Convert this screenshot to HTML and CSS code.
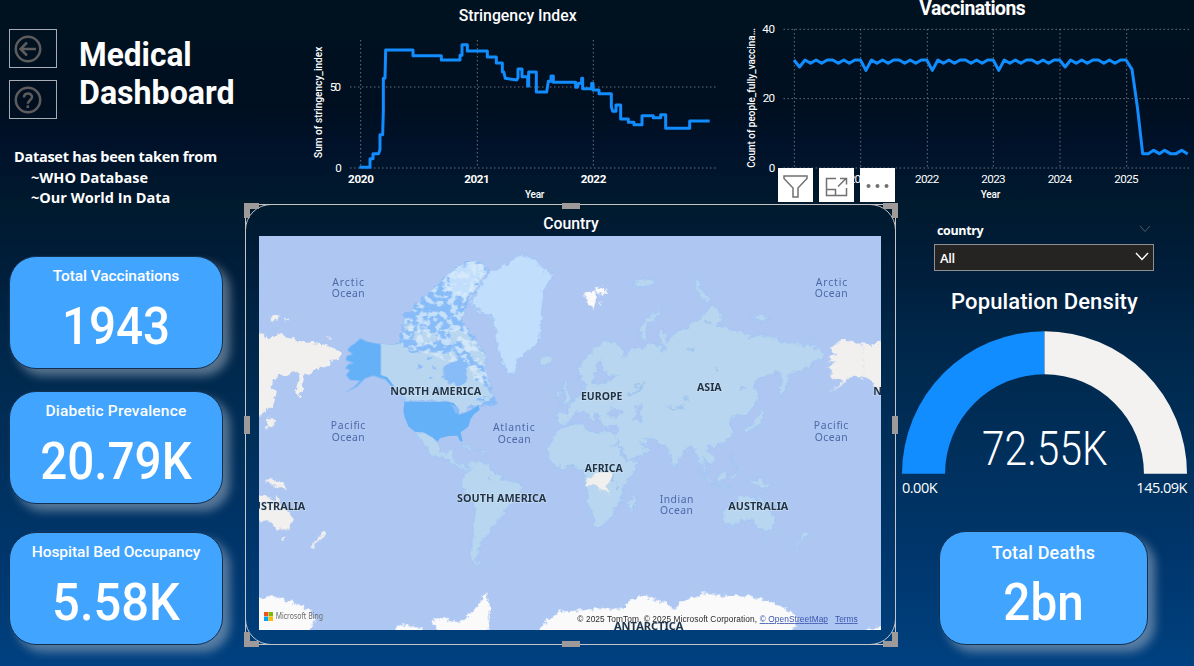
FILE: index.html
```html
<!DOCTYPE html>
<html lang="en">
<head>
<meta charset="utf-8">
<title>Medical Dashboard</title>
<link rel="stylesheet" href="styles.css">
</head>
<body>
<main class="dashboard">
  <aside class="sidebar">
    <header class="masthead">
      <nav class="nav-buttons">
        <button class="nav-button" aria-label="Back"><svg viewBox="0 0 28 28"><circle cx="14" cy="14" r="12.2"/><path d="M22 14H7M13 7.5 6.5 14l6.5 6.5"/></svg></button>
        <button class="nav-button" aria-label="Help"><svg viewBox="0 0 28 28"><circle cx="14" cy="14" r="12.2"/><path d="M10 11.5c0-5.2 8-5.2 8-.4 0 3-4.2 3.300-4.200 6.700M13.800 19.300v2.800"/></svg></button>
      </nav>
      <h1 class="title"><span class="t1">Medical</span><br><span class="t2">Dashboard</span></h1>
    </header>
    <div class="source">
      <p>Dataset has been taken from</p>
      <p class="indent">~WHO Database</p>
      <p class="indent">~Our World In Data</p>
    </div>
    <section class="cards">
      <article class="card"><h2 class="card-title vacc">Total Vaccinations</h2><p class="card-value v1">1943</p></article>
      <article class="card"><h2 class="card-title">Diabetic Prevalence</h2><p class="card-value v2">20.79K</p></article>
      <article class="card third"><h2 class="card-title beds">Hospital Bed Occupancy</h2><p class="card-value v3">5.58K</p></article>
    </section>
  </aside>

  <section class="charts">
    <svg class="chart stringency" viewBox="0 0 1290 612">
      <text class="chart-title" x="476" y="62" textLength="354" lengthAdjust="spacingAndGlyphs">Stringency Index</text>
      <g class="grid"><path d="M151 261H1246M151 504H1246M182 121V504M532 121V504M880 121V504"/></g>
      <text class="axis-name" transform="translate(66 474) rotate(-90)" textLength="334" lengthAdjust="spacingAndGlyphs">Sum of stringency_index</text>
      <text class="tick" x="89" y="272" textLength="34">50</text>
      <text class="tick" x="106" y="515">0</text>
      <text class="tick bold" x="144" y="549" textLength="78">2020</text>
      <text class="tick bold" x="493" y="549" textLength="76">2021</text>
      <text class="tick bold" x="842" y="549" textLength="77">2022</text>
      <text class="axis-name" x="675" y="594" textLength="58">Year</text>
      <path class="line" d="M178 502H210V476H219V461H236L240 448V404H248L250 330V235H255L257 150H339V167H424V180H480V166H486V134H502V153H562V171H589V189H607V215H611L616 235 650 240 654 233V207H666V230H683V258H686V216H709V276H740L745 244H753V228H760V247H827V262H832L836 250H845V235H848V266H875V250H879V270H897V281H934V320L938 334H948V315H962V357H985V367H1002V374H1026V347H1060V353H1082V344H1097V385H1169V363H1229"/>
    </svg>
    <svg class="chart vaccinations" viewBox="0 0 1392 612">
      <text class="chart-title bold" x="568" y="46" textLength="319">Vaccinations</text>
      <g class="grid"><path d="M161 88H1384M161 296H1384M161 504H1384M193 88V504M392 88V504M592 88V504M790 88V504M990 88V504M1190 88V504"/></g>
      <text class="axis-name" transform="translate(75 503) rotate(-90)" textLength="418" lengthAdjust="spacingAndGlyphs">Count of people_fully_vaccina…</text>
      <text class="tick" x="97" y="99" textLength="38">40</text>
      <text class="tick" x="98" y="306" textLength="37">20</text>
      <text class="tick" x="116" y="515">0</text>
      <text class="tick" x="356" y="549" textLength="73">2021</text>
      <text class="tick" x="555" y="549" textLength="73">2022</text>
      <text class="tick" x="754" y="549" textLength="73">2023</text>
      <text class="tick" x="953" y="549" textLength="73">2024</text>
      <text class="tick" x="1153" y="549" textLength="73">2025</text>
      <text class="axis-name" x="752" y="594" textLength="59">Year</text>
      <path class="line" d="M192 180l16.600 21 16.600-21 16.600 10 16.600-10 16.600 10 16.600-10h16.600l16.600 10 16.600-10 16.600 10 16.600-10h16.600l16.600 31 16.600-31 16.600 10 16.600-10 16.600 10 16.600-10h16.600l16.600 10 16.600-10 16.600 10 16.600-10h16.600l16.600 31 16.600-31 16.600 10 16.600-10 16.600 10 16.600-10h16.600l16.600 10 16.600-10 16.600 10 16.600-10h16.600l16.600 31 16.600-31 16.600 10 16.600-10 16.600 10 16.600-10h16.600l16.600 10 16.600-10 16.600 10 16.600-10h16.600l16.600 21 16.600-21 16.600 10 16.600-10 16.600 10 16.600-10h16.600l16.600 10 16.600-10 16.600 10 16.600-10h16.600L1206 208 1222 320 1238 461H1255L1271 451 1288 461 1304 451 1321 461H1338L1355 451 1373 462"/>
    </svg>
    <div class="toolbar">
      <button class="tool" aria-label="Filter"><svg viewBox="0 0 35 34"><path d="M6 8h23v2.500l-9 9.500v9h-5v-9L6 10.500z"/></svg></button>
      <button class="tool" aria-label="Focus mode"><svg viewBox="0 0 35 34"><path d="M17 10.500H7.500V27.500H27.500V20M7.500 21.500H16.500V27.500M19 18.500l8.500-8.500M21 10.500h6.500v6"/></svg></button>
      <button class="tool" aria-label="More"><svg viewBox="0 0 35 34"><g class="dots"><circle cx="8.500" cy="18" r="2"/><circle cx="17.500" cy="18" r="2"/><circle cx="26.500" cy="18" r="2"/></g></svg></button>
    </div>
  </section>

  <section class="map-panel">
    <div class="rounded"></div>
    <i class="corner tl"></i><i class="corner tr"></i><i class="corner bl"></i><i class="corner br"></i>
    <i class="grip top"></i><i class="grip bottom"></i><i class="grip left"></i><i class="grip right"></i>
    <h2 class="map-title"><span>Country</span></h2>
    <svg class="map" viewBox="57 108 1866 1182">
      <defs>
        <filter id="coast" x="-5%" y="-5%" width="110%" height="110%"><feTurbulence type="fractalNoise" baseFrequency=".06" numOctaves="3" seed="4"/><feDisplacementMap in="SourceGraphic" scale="24" xChannelSelector="R" yChannelSelector="G"/></filter>
        <filter id="lakes" x="0" y="0" width="100%" height="100%"><feTurbulence type="fractalNoise" baseFrequency=".05" numOctaves="5" seed="8"/><feColorMatrix values="0 0 0 0 .71 0 0 0 0 .85 0 0 0 0 .96 9 0 0 0 -4.300"/></filter>
        <clipPath id="arctic"><path d="M95 290 103 225 130 188 155 165 205 118 250 72 290 52 325 48 350 65 350 80 305 150 280 210 275 232 320 290 345 330 348 380 360 430 310 400 292 350 230 350 190 330 90 310Z"/></clipPath>
        <path id="eurasia" d="M355 510 358 490 385 465 410 440 435 422 465 428 490 450 485 467 500 470 505 450 545 440 575 430 600 435 600 400 612 392 625 425 640 405 655 395 680 385 690 370 720 355 745 335 750 318 775 330 785 350 770 375 800 385 850 395 870 415 900 400 930 410 970 425 1010 430 1050 435 1075 445 1092 467 1085 478 1060 480 1060 495 1020 510 985 525 980 560 965 590 955 578 965 535 960 515 900 530 880 560 898 580 890 615 860 640 830 650 810 655 818 690 810 710 790 728 760 737 738 745 762 765 765 785 750 792 738 780 727 775 730 795 742 818 730 812 717 780 707 750 690 738 670 755 655 780 648 805 635 785 622 745 605 738 590 722 555 712 570 745 540 768 505 780 490 750 465 715 475 682 440 680 425 668 420 650 400 640 410 665 402 668 385 645 367 633 340 645 325 668 300 672 288 660 292 635 325 638 323 615 350 597 370 575 378 550 360 540Z"/>
        <path id="alaska" d="M423 433V525L440 540 400 527 375 535 350 560 316 578 345 558 360 542 330 540 318 525 330 510 316 505 325 492 342 490 318 480 320 468 338 462 322 450 330 440 345 430 362 415 380 425Z"/>
        <path id="canada" d="M423 430 450 435 475 427 482 405 490 350 520 320 545 297 605 243 640 207 680 187 715 183 740 200 742 215 720 245 695 285 680 320 670 345 665 367 680 385 710 425 735 465 738 485 735 515 745 555 762 590 775 610 760 617 720 615 715 630 690 625 660 645 652 625 630 605H493L480 590 460 560 445 540 423 527Z"/>
        <path id="australia" d="M1450 930 1475 910 1500 892 1525 885 1535 895 1555 905 1560 882 1570 910 1595 935 1607 960 1595 990 1575 995 1555 980 1535 960 1500 965 1460 978 1448 955ZM1567 1010 1582 1010 1577 1022ZM1698 992 1706 1004 1685 1020 1670 1042 1660 1040 1682 1015ZM1530 838 1565 840 1585 855 1590 868 1560 860 1535 850Z"/>
      </defs>
      <path class="sea" d="M57 108H1923V1290H57z"/>
      <g filter="url(#coast)">
        <g class="white">
          <use href="#eurasia" x="-789"/><use href="#alaska" x="1449"/><use href="#canada" x="1449"/><use href="#australia" x="-1449"/>
          <path d="M90 348 118 345 115 365 92 360ZM133 353 148 358 135 363ZM85 650 105 665 100 680 75 685ZM262 408l14 5-8 4Z"/>
          <path class="snow" d="M1032 282 1060 268 1070 290 1058 330 1042 305ZM1065 265 1098 262 1097 280 1072 282ZM1078 308l10 5-6 5z"/>
          <path class="snow" d="M40 1210 80 1188 110 1190 150 1205 190 1220 215 1235 225 1255 215 1275 205 1310H40ZM465 1290 480 1272 545 1285 550 1310H465ZM577 1260 610 1254 640 1268 665 1262 700 1235 725 1200 740 1173 750 1220 745 1310H600ZM885 1310 920 1260 960 1235 1040 1230 1100 1225 1145 1230 1160 1210 1205 1183 1240 1198 1280 1210 1300 1225 1350 1195 1390 1180 1450 1188 1530 1190 1580 1203 1630 1222 1675 1252 1655 1310ZM1860 1290 1940 1280V1310Z"/>
        </g>
        <use class="land" href="#eurasia" x="660"/>
        <use class="land" href="#australia"/>
        <g class="land" transform="translate(660 0)">
          <path class="ice" d="M35 305 60 255 90 215 140 195 150 180 185 165 225 172 245 205 280 225 270 245 245 270 250 310 245 360 240 400 238 430 200 455 170 480 158 522 140 515 120 470 110 420 105 380 95 350 65 340 45 325Z"/>
          <path d="M240 475 270 470 277 485 255 497 242 490ZM512 250 560 235 592 245 560 262ZM600 330 607 340 577 357 560 385 558 425 540 415 545 375 570 345ZM308 540 320 540 322 570 335 605 305 614 315 590ZM290 575 305 568 303 590 290 592Z"/>
          <path d="M275 715 300 685 330 675 370 670 380 690 410 700 430 690 470 703 480 735 495 770 510 785 537 780 520 820 495 850 485 870 490 900 465 925 455 950 430 975 405 977 395 945 378 900 385 865 375 840 370 815 350 800 310 808 285 800 262 770 265 740ZM505 905 525 885 531 900 515 933 505 925Z"/>
          <path d="M25 795 45 782 85 795 105 820 140 840 185 850 187 865 165 900 140 925 120 960 95 980 80 1005 65 1030 52 1055 46 1080 68 1096 45 1094 30 1070 35 1030 42 970 46 920 25 890 6 860 5 840 20 820Z"/>
          <path d="M703 240 715 240 722 265 752 300 745 308 715 285ZM875 350 905 345 930 358 900 365ZM1050 405l16 5-10 8ZM895 650 905 620 912 640 895 680 860 695 835 690 880 672ZM770 825 800 810 795 840 775 842ZM715 808 757 852 745 850ZM755 853 812 860 800 864ZM815 770 822 790 835 805 820 795ZM808 825 835 815 815 840Z"/>
          <path class="plain" d="M385 838 403 826 412 818 455 815 450 845 440 860 450 882 425 872 415 857 382 855Z"/>
          <g class="water"><path d="M420 480 410 510 400 555 435 550 475 525 445 525 432 510ZM440 645 460 618 492 640 470 650ZM522 620 545 615 540 640 545 668 525 660 530 640ZM540 725 565 742 550 742ZM470 720 505 780 485 770ZM600 435 610 460 618 435Z"/></g>
          <path class="rivers" d="M500 585 535 575 555 545M640 630l30-15M520 560l20-5M680 450l25-8-15 15M760 500l15 15M670 590l10 15M730 570l30-10M840 568l18-3M450 740l18-4M730 370l22-5M625 620l15 10M318 800l25-5M85 835l10 5M455 820l5 25M468 850l4 20"/>
        </g>
        <g class="land" transform="translate(390 135)">
          <path d="M130 560 160 562 190 575 203 592 210 620 230 628 245 612 258 614 245 640 265 655 290 668 310 672 285 675 250 655 220 642 190 632 172 610 150 585ZM270 600 290 598 322 618 300 612ZM325 618 352 622 345 630Z"/>
        </g>
      </g>
      <g filter="url(#coast)"><use class="arctic-sea" href="#canada"/>
        <g class="land" transform="translate(390 135)"><path d="M33 295 60 300 85 298 110 310 150 318 190 320 215 325 245 318 262 332 250 350 225 362 218 395 240 415 270 420 285 410 292 365 300 345 322 370 345 420 372 455 330 478 300 485 268 510 260 490 235 468H103L80 440 55 405 33 392Z"/><path d="M100 235 125 235 135 255 105 262ZM130 265 160 255 195 262 210 288 165 298 125 285ZM270 245 300 275 345 335 347 370 315 350 285 310 245 290 232 262Z"/><path class="ice" d="M240 90 270 65 310 50 345 62 348 80 320 115 300 150 280 175 270 150 245 145 220 120 240 115Z"/></g>
      </g>
      <g transform="translate(390 135)"><g clip-path="url(#arctic)" opacity=".75"><path filter="url(#lakes)" d="M85 40H375V440H85z"/></g><g filter="url(#coast)"><path class="arctic-sea" d="M222 365 245 352 280 358 290 385 282 415 262 425 245 410 220 400ZM140 355l22 5-15 12ZM105 312l45 8-15 10ZM180 390l16 8-18 4ZM205 420l10 28-14-10ZM320 460l35-5-30 16ZM170 335l20 8-22 4ZM300 330l20 25-14 6-12-18ZM315 395l14 14-10 4ZM190 355l12 20-10-4ZM260 285l20 18-20 6-16-14Z"/></g></g>
      <use class="usa" href="#alaska"/>
      <path class="bare" d="M423 433 455 437 480 430 500 455 470 515 442 535 423 525Z"/>
      <g class="usa" transform="translate(390 135)"><path d="M103 470H235L252 475 268 495 265 510 290 502 305 494 318 485 325 480 329 494 312 508 302 522 295 545 272 562 278 590 270 588 262 572 235 573 210 580 203 590 185 575 160 562 135 560 116 545 105 520 100 500ZM33 390 52 397 72 424 64 424 48 405Z"/><path class="arctic-sea" d="M240 478 262 485 268 500 258 508 250 490Z"/></g>
      <g class="ocean">
        <text x="277" y="258" textLength="95">Arctic</text><text x="275" y="292" textLength="99">Ocean</text>
        <text x="1727" y="258" textLength="95">Arctic</text><text x="1724" y="292" textLength="99">Ocean</text>
        <text x="272" y="688" textLength="104">Pacific</text><text x="275" y="722" textLength="99">Ocean</text>
        <text x="1721" y="688" textLength="104">Pacific</text><text x="1724" y="722" textLength="99">Ocean</text>
        <text x="759" y="693" textLength="125">Atlantic</text><text x="773" y="728" textLength="99">Ocean</text>
        <text x="1259" y="908" textLength="101">Indian</text><text x="1260" y="943" textLength="99">Ocean</text>
      </g>
      <g class="continent">
        <text x="451" y="584" textLength="273" lengthAdjust="spacingAndGlyphs">NORTH AMERICA</text><text x="1023" y="599" textLength="124" lengthAdjust="spacingAndGlyphs">EUROPE</text>
        <text x="1371" y="572" textLength="74" lengthAdjust="spacingAndGlyphs">ASIA</text><text x="1034" y="816" textLength="114" lengthAdjust="spacingAndGlyphs">AFRICA</text>
        <text x="651" y="906" textLength="268" lengthAdjust="spacingAndGlyphs">SOUTH AMERICA</text><text x="1465" y="929" textLength="180" lengthAdjust="spacingAndGlyphs">AUSTRALIA</text>
        <text x="16" y="929" textLength="180" lengthAdjust="spacingAndGlyphs">AUSTRALIA</text><text x="1900" y="584" textLength="273" lengthAdjust="spacingAndGlyphs">NORTH AMERICA</text>
        <text x="1122" y="1290" textLength="208" lengthAdjust="spacingAndGlyphs">ANTARCTICA</text>
      </g>
      <g><path fill="#f25022" d="M72 1236h13v13H72z"/><path fill="#7fba00" d="M86 1236h13v13H86z"/><path fill="#00a4ef" d="M72 1250h13v13H72z"/><path fill="#ffb900" d="M86 1250h13v13H86z"/></g>
      <text class="bing" x="107" y="1258" textLength="142" lengthAdjust="spacingAndGlyphs">Microsoft Bing</text>
      <g class="credits"><text x="1012" y="1266" textLength="539">© 2025 TomTom, © 2025 Microsoft Corporation,</text><a><text x="1559" y="1266" textLength="205">© OpenStreetMap</text><text x="1785" y="1266" textLength="68">Terms</text></a></g>
    </svg>
  </section>

  <aside class="right">
    <div class="slicer">
      <div class="slicer-head"><span class="slicer-name">country</span><svg viewBox="0 0 12 8"><path d="M1 1l5 5.500L11 1"/></svg></div>
      <div class="select"><span>All</span><svg viewBox="0 0 14 9"><path d="M1 1l6 6.500L13 1"/></svg></div>
    </div>
    <section class="gauge">
      <h2 class="gauge-title">Population Density</h2>
      <svg class="dial" viewBox="0 0 854 427">
        <path fill="#118dff" d="M0 427A427 427 0 0 1 427 0V129A298 298 0 0 0 129 427Z"/>
        <path fill="#f3f2f1" d="M427 0A427 427 0 0 1 854 427H725A298 298 0 0 0 427 129Z"/>
        <text class="gauge-value" x="240" y="401" textLength="376" lengthAdjust="spacingAndGlyphs">72.55K</text>
      </svg>
      <div class="range"><span>0.00K</span><span>145.09K</span></div>
    </section>
    <article class="card deaths"><h2 class="card-title">Total Deaths</h2><p class="card-value v4">2bn</p></article>
  </aside>
</main>
</body>
</html>
```
FILE: styles.css
```css
* { box-sizing: border-box; }
body { margin: 0; font-family: Roboto, "Liberation Sans", sans-serif; color: #fff; }
h1, h2, p { margin: 0; }
button { padding: 0; font: inherit; }
svg { display: block; }
.dashboard {
  width: 1194px; height: 666px; overflow: hidden;
  display: grid; grid-template-columns: 245px 651px 298px; grid-template-rows: 204px 462px;
  background: linear-gradient(180deg, #001220 0%, #000f20 16%, #00122a 22%, #001a2e 31%, #001d3a 40%, #002648 50%, #002e58 65%, #00366c 83%, #003f7c 97%, #004182 100%);
}
.sidebar { grid-row: 1 / 3; }

.masthead { display: flex; gap: 22px; padding: 29px 0 0 9px; height: 147px; }
.nav-buttons { display: flex; flex-direction: column; gap: 12px; }
.nav-button { width: 48px; height: 39px; border: 1px solid #a9adb3; background: none; padding: 0 0 0 4px; }
.nav-button svg { width: 28px; height: 28px; fill: none; stroke: #5d5b5b; stroke-width: 2.500; }
.title { padding-top: 6px; font-size: 34px; font-weight: 700; line-height: 38px; }
.t1 { display: inline-block; transform: scaleX(.93); transform-origin: 0 0; }
.t2 { display: inline-block; transform: scaleX(.945); transform-origin: 0 0; }
.source { padding-left: 14px; font: 700 14.500px/20.500px "Open Sans", "Noto Sans", sans-serif; letter-spacing: -.28px; }
.indent { padding-left: 17px; letter-spacing: 0; }

.cards { display: flex; flex-direction: column; gap: 22px; padding: 47px 0 0 9px; }
.card {
  width: 214px; height: 113px; border: 1px solid #12304f; border-radius: 27px; background: #41a4ff;
  box-shadow: 7px 7px 10px 0 rgba(175, 190, 205, .5); text-align: center; padding-top: 10px;
}
.third { margin-top: 6px; }
.card-title { font-size: 15.500px; line-height: 18px; font-weight: 500; letter-spacing: .2px; }
.vacc { letter-spacing: -.1px; }
.beds { letter-spacing: -.03px; }
.card-value { font-size: 52px; line-height: 60px; font-weight: 500; margin-top: 12px; transform: scaleX(.915); }
.v3 { transform: scaleX(.94); }

.charts { grid-column: 2 / 4; display: flex; position: relative; padding-left: 55px; }
.chart { height: 204px; overflow: visible; }
.stringency { width: 430px; }
.vaccinations { width: 464px; }
.chart text { fill: #fff; }
.chart .chart-title { font-size: 48px; font-weight: 500; }
.chart .chart-title.bold { font-size: 58px; font-weight: 700; }
.tick { font-size: 35px; }
.axis-name { font-size: 30px; font-weight: 500; }
.tick.bold { font-weight: 700; }
.grid { fill: none; stroke: #9aa0a8; stroke-width: 3; stroke-dasharray: 3 9; }
.line { fill: none; stroke: #118dff; stroke-width: 9; stroke-linejoin: round; }
.toolbar { position: absolute; left: 533px; top: 168px; display: flex; gap: 6px; }
.tool { width: 35px; height: 34px; background: #fff; border: 0; }
.tool svg { width: 35px; height: 34px; fill: none; stroke: #727070; stroke-width: 1.500; }
.tool .dots { fill: #727070; stroke: none; }

.map-panel { position: relative; height: 441px; border: 1px solid #c3c5c8; padding: 7px 0 0 13px; }
.rounded { position: absolute; inset: -1px; border: 1px solid #c3c5c8; border-radius: 26px; }
.corner { position: absolute; width: 15px; height: 15px; border: 0 solid #9d9a99; }
.tl { left: -2px; top: -2px; border-width: 6px 0 0 6px; }
.tr { right: -3px; top: -2px; border-width: 6px 6px 0 0; }
.bl { left: -2px; bottom: -3px; border-width: 0 0 6px 6px; }
.br { right: -3px; bottom: -3px; border-width: 0 6px 6px 0; }
.grip { position: absolute; background: #9d9a99; }
.top { left: 316px; top: -2px; width: 18px; height: 6px; }
.bottom { left: 316px; bottom: -3px; width: 18px; height: 6px; }
.left { left: -2px; top: 211px; width: 6px; height: 18px; }
.right.grip { right: -3px; top: 211px; width: 6px; height: 18px; }
.map-title { width: 624px; height: 24px; text-align: center; font-size: 15.800px; line-height: 24px; font-weight: 500; }
.map { width: 622px; height: 394px; overflow: hidden; }
.sea { fill: #adc6f2; }
.white { fill: #f1f0ee; }
.snow { fill: #fafafa; }
.land { fill: #b8d6f0; stroke: #9cc4f5; stroke-width: 2.500; }
.bare { fill: #b8d6f0; }
.land .ice { fill: #c1dffc; }
.plain { fill: #f1f0ee; stroke: none; }
.arctic-sea { fill: #88bcf8; stroke: none; }
.usa { fill: #65b1f8; }
.water { fill: #adc6f2; stroke: #9cc4f5; }
.rivers { fill: none; stroke: #9dc3ec; stroke-width: 5; }
.ocean { font: 31px "Noto Sans", sans-serif; fill: #5068a8; }
.continent { font: 700 34px "Noto Sans", sans-serif; fill: #1f3346; stroke: #dbe6f2; stroke-opacity: .6; stroke-width: 4; paint-order: stroke; }
.bing { font: 24px "Noto Sans", sans-serif; fill: #6b6b6b; }
.credits { font: 25px "Liberation Sans", sans-serif; fill: #2b2b2b; }
.credits a { fill: #3d55b0; text-decoration: underline; }

.slicer { padding: 18px 0 0 38px; }
.slicer-head { display: flex; justify-content: space-between; align-items: center; width: 220px; height: 17px; padding: 0 3px 0 3px; font: 700 12.500px/17px "Open Sans", sans-serif; }
.slicer-head svg { width: 12px; height: 8px; fill: none; stroke: #555b62; margin-top: -3px; }
.slicer-name { letter-spacing: -.35px; }
.select { display: flex; justify-content: space-between; align-items: center; width: 220px; height: 27px; margin-top: 5px; padding: 1px 4px 0 5px; background: #252423; border: 1px solid #8f8f90; font: 600 13px/24px "Open Sans", sans-serif; letter-spacing: -.4px; }
.select svg { width: 14px; height: 9px; fill: none; stroke: #fff; stroke-width: 1.400; margin-top: -3px; }
.gauge { padding: 18px 0 0 6px; width: 291px; }
.gauge-title { text-align: center; font-size: 22px; line-height: 26px; font-weight: 500; letter-spacing: .1px; }
.dial { width: 285px; height: 143px; margin-top: 16px; }
.gauge-value { font: 300 146px Roboto, sans-serif; fill: #fff; }
.range { display: flex; justify-content: space-between; font: 14.500px/20px "Open Sans", sans-serif; margin-top: 4px; letter-spacing: -.5px; }
.deaths { width: 209px; margin: 33px 0 0 43px; height: 114px; }
.deaths .card-title { font-size: 18px; line-height: 22px; }
.deaths .card-value { margin-top: 9px; }
```
